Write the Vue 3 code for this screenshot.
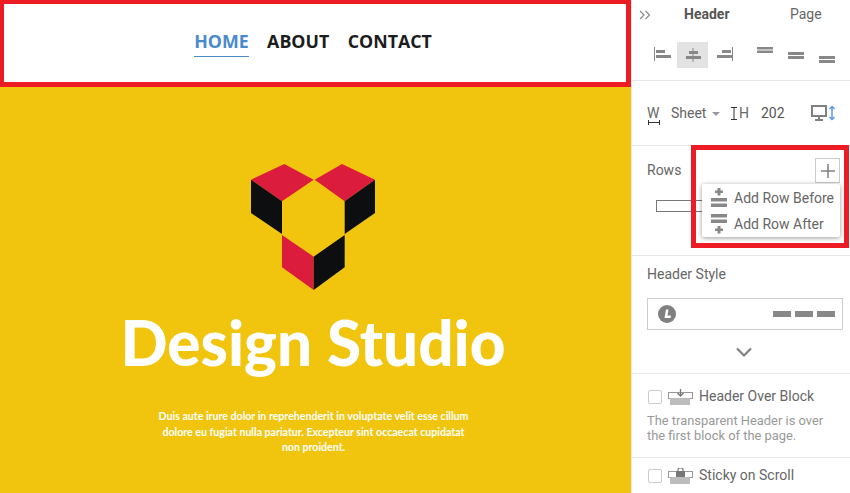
<template>
  <div class="page">
    <main class="canvas">
      <header class="site-header">
        <nav class="site-nav">
          <a class="active">HOME</a>
          <a>ABOUT</a>
          <a>CONTACT</a>
        </nav>
      </header>
      <section class="hero">
        <svg class="logo" width="124" height="127" viewBox="0 0 372 381">
          <polygon fill="#dc1c3c" points="0,47 100,0 188,47 93,112" />
          <polygon fill="#dc1c3c" points="191,47 273,0 372,47 281,112" />
          <polygon fill="#0c0e10" points="0,47 93,112 93,210 0,147" />
          <polygon fill="#0c0e10" points="372,47 281,112 281,210 372,147" />
          <polygon fill="#dc1c3c" points="93,213 188,278 188,378 93,310" />
          <polygon fill="#0c0e10" points="281,213 188,278 188,378 281,310" />
        </svg>
        <h1>Design Studio</h1>
        <p>Duis aute irure dolor in reprehenderit in voluptate velit esse cillum dolore eu fugiat nulla pariatur. Excepteur sint occaecat cupidatat non proident.</p>
      </section>
    </main>

    <aside class="panel">
      <div class="tabs">
        <svg class="collapse" width="12" height="10" viewBox="0 0 12 10" fill="none" stroke="#8a8a8a" stroke-width="1.2">
          <path d="M1 1l4 4-4 4M6.500 1l4 4-4 4" />
        </svg>
        <span class="tab current">Header</span>
        <span class="tab">Page</span>
      </div>

      <div class="aligns">
        <span v-for="a in aligns" :key="a.id" class="align" :class="[a.id, { on: a.on }]">
          <svg width="18" height="18" viewBox="0 0 18 18" fill="#888">
            <rect v-for="(r, i) in a.rects" :key="i" :x="r[0]" :y="r[1]" :width="r[2]" :height="r[3]" />
          </svg>
        </span>
      </div>

      <div class="size-row">
        <span class="w-label">W</span>
        <svg class="w-bar" width="12" height="5" viewBox="0 0 12 5" fill="none" stroke="#333" stroke-width="1">
          <path d="M.5 0v5M11.500 0v5M0 2.500h12" />
        </svg>
        <span class="sheet">Sheet</span>
        <span class="caret"></span>
        <svg class="h-cursor" width="6" height="13" viewBox="0 0 6 13" fill="none" stroke="#333" stroke-width="1">
          <path d="M0 .5h6M0 12.500h6M3 0v13" />
        </svg>
        <span class="h-label">H</span>
        <span class="h-value">202</span>
        <svg class="monitor" width="26" height="16" viewBox="0 0 26 16" fill="none">
          <rect x="1" y="1" width="14" height="10" stroke="#808080" stroke-width="2" />
          <path d="M8 11v3M4 15h8" stroke="#808080" stroke-width="2" />
          <path d="M21 1.500v13M18.500 4L21 1.500 23.500 4M18.500 12l2.500 2.500 2.500-2.500" stroke="#5a9bf0" stroke-width="1.500" />
        </svg>
      </div>

      <div class="rows">
        <span class="label">Rows</span>
        <span class="add-btn">
          <svg width="14" height="14" viewBox="0 0 14 14" stroke="#808080" stroke-width="1.500"><path d="M7 0v14M0 7h14" /></svg>
        </span>
        <div class="row-preview"></div>
        <div class="row-menu">
          <div class="menu-item">
            <svg width="16" height="20" viewBox="0 0 16 20" fill="#888">
              <path d="M6.500 0h3v2.500H12v2.500H9.500v2.500h-3V5H4V2.500h2.500z" />
              <rect y="10" width="16" height="3.500" /><rect y="15.500" width="16" height="3.500" />
            </svg>
            <span>Add Row Before</span>
          </div>
          <div class="menu-item">
            <svg width="16" height="20" viewBox="0 0 16 20" fill="#888">
              <rect y="0" width="16" height="3.500" /><rect y="5.500" width="16" height="3.500" />
              <path d="M6.500 12h3v2.500H12V17H9.500v2.500h-3V17H4v-2.500h2.500z" />
            </svg>
            <span>Add Row After</span>
          </div>
        </div>
        <div class="mark"></div>
      </div>

      <div class="style-block">
        <span class="label">Header Style</span>
        <div class="style-box">
          <span class="style-logo">
            <svg width="18" height="18" viewBox="0 0 18 18">
              <circle cx="9" cy="9" r="9" fill="#808080" />
              <path d="M8 4.500h2.500L9.500 10.500h3.500l-.4 2.500H6.500z" fill="#fff" />
            </svg>
          </span>
          <span class="dashes"><i></i><i></i><i></i></span>
        </div>
        <svg class="chevron" width="18" height="11" viewBox="0 0 18 11" fill="none" stroke="#808080" stroke-width="2.200">
          <path d="M2 1.500l7 7 7-7" />
        </svg>
      </div>

      <div class="option over">
        <div class="option-row">
          <span class="check"></span>
          <svg width="25" height="16" viewBox="0 0 25 16">
            <rect x="0.500" y="3.500" width="24" height="6" fill="#fff" stroke="#999" />
            <rect x="2" y="9" width="20" height="7" fill="#bdbdbd" />
            <path d="M12.500 0v6M9.500 4l3 3 3-3" fill="none" stroke="#777" stroke-width="1.300" />
          </svg>
          <span class="option-name">Header Over Block</span>
        </div>
        <p>The transparent Header is over the first block of the page.</p>
      </div>

      <div class="option sticky">
        <div class="option-row">
          <span class="check"></span>
          <svg width="25" height="16" viewBox="0 0 25 16">
            <rect x="0.500" y="3.500" width="24" height="6" fill="#fff" stroke="#999" />
            <rect x="2" y="9" width="20" height="7" fill="#bdbdbd" />
            <rect x="8" y="3" width="9" height="6" fill="#777" />
            <path d="M10 3.500V2a2.500 2 0 0 1 5 0v1.500" fill="none" stroke="#777" stroke-width="1.200" />
          </svg>
          <span class="option-name">Sticky on Scroll</span>
        </div>
      </div>
    </aside>
  </div>
</template>

<script setup>
const aligns = [
  { id: 'left', rects: [[1, 1, 1, 14], [3, 4, 9, 3], [3, 9, 15, 3]] },
  { id: 'center', on: true, rects: [[8.500, 2, 1, 14], [5, 5, 9, 3], [2, 10, 15, 3]] },
  { id: 'right', rects: [[17, 1, 1, 14], [7, 4, 9, 3], [2, 9, 15, 3]] },
  { id: 'top', rects: [[1, 1, 16, 2.500], [1, 4.500, 16, 2.500]] },
  { id: 'middle', rects: [[1, 6, 16, 3], [1, 10, 16, 3]] },
  { id: 'bottom', rects: [[1, 10, 16, 3], [1, 14, 16, 3]] }
];
</script>

<style>
html, body { margin: 0; overflow: hidden; background: #fff; }
</style>

<style scoped>
.page {
  display: flex;
  width: 850px;
  height: 493px;
  overflow: hidden;
  font-family: Roboto, "Liberation Sans", sans-serif;
  color: #666;
}
.canvas {
  width: 631px;
  flex: none;
  display: flex;
  flex-direction: column;
}
.site-header {
  box-sizing: border-box;
  height: 87px;
  border: 4px solid #ed1c24;
  border-bottom-width: 5px;
  border-right-width: 5px;
  background: #fff;
  display: flex;
  justify-content: center;
  padding: 25px 4px 0 0;
}
.site-nav {
  display: flex;
  gap: 18.500px;
  height: 28px;
  font-family: "Open Sans", sans-serif;
  font-weight: 700;
  font-size: 17.800px;
  line-height: 24px;
  color: #1c1c1c;
}
.site-nav a.active {
  color: #4a8acb;
  border-bottom: 1px solid #4a8acb;
}
.hero {
  flex: 1;
  background: #f1c50e;
  display: flex;
  flex-direction: column;
  align-items: center;
  padding-top: 77px;
  color: #fff;
}
.logo { margin-left: -6px; }
h1 {
  margin: 16px 0 0 -5px;
  font-family: Lato, "Open Sans", sans-serif;
  font-weight: 900;
  font-size: 62px;
  line-height: 70px;
}
.hero p {
  margin: 32px 0 0 -4px;
  width: 320px;
  text-align: center;
  font-family: Lato, "Open Sans", sans-serif;
  font-weight: 700;
  font-size: 10.600px;
  line-height: 15.500px;
}
.panel {
  flex: 1;
  border-left: 1px solid #e8e8e8;
  position: relative;
  font-size: 14px;
}
.tabs {
  height: 29px;
  display: flex;
  align-items: center;
  position: relative;
}
.collapse { position: absolute; left: 7px; top: 10px; }
.tab { position: absolute; top: 6px; line-height: 17px; }
.tab.current { left: 52px; font-weight: 700; color: #555; }
.tab:not(.current) { left: 158px; color: #666; }
.aligns {
  display: flex;
  height: 52px;
  box-sizing: border-box;
  padding: 13px 0 0 14px;
  border-bottom: 1px solid #e8e8e8;
}
.align {
  width: 31px;
  height: 26px;
  display: flex;
  align-items: center;
  justify-content: center;
}
.align.on { background: #e3e3e3; }
.align.top { margin-left: 10px; }
.size-row {
  height: 65px;
  box-sizing: border-box;
  border-bottom: 1px solid #e8e8e8;
  position: relative;
  line-height: 17px;
}
.size-row > * { position: absolute; top: 24px; }
.w-label { left: 15px; }
.size-row .w-bar { left: 16px; top: 39px; }
.sheet { left: 39px; }
.size-row .caret {
  left: 80px;
  top: 31px;
  border: 4px solid transparent;
  border-top-color: #999;
}
.size-row .h-cursor { left: 99px; top: 26px; }
.h-label { left: 107px; }
.h-value { left: 129px; color: #555; }
.size-row .monitor { left: 179px; top: 24px; }
.rows {
  height: 110px;
  box-sizing: border-box;
  border-bottom: 1px solid #e8e8e8;
  position: relative;
}
.label { position: absolute; left: 15px; top: 16px; line-height: 17px; }
.add-btn {
  position: absolute;
  left: 183px;
  top: 12px;
  width: 25px;
  height: 25px;
  box-sizing: border-box;
  border: 1px solid #ccc;
  display: flex;
  align-items: center;
  justify-content: center;
}
.row-preview {
  position: absolute;
  left: 24px;
  top: 54px;
  width: 60px;
  height: 12px;
  box-sizing: border-box;
  border: 1px solid #777;
}
.row-menu {
  position: absolute;
  left: 70px;
  top: 38px;
  width: 138px;
  height: 53px;
  padding-top: 1px;
  box-sizing: border-box;
  background: #fff;
  border-radius: 2px;
  box-shadow: 0 1px 5px rgba(0, 0, 0, 0.4);
  z-index: 2;
}
.menu-item {
  height: 26px;
  display: flex;
  align-items: center;
  gap: 7px;
  padding-left: 9px;
  white-space: nowrap;
}
.mark {
  position: absolute;
  left: 59px;
  top: -1px;
  width: 158px;
  height: 103px;
  box-sizing: border-box;
  border: 5px solid #ed1c24;
  z-index: 3;
}
.style-block {
  height: 118px;
  box-sizing: border-box;
  border-bottom: 1px solid #e8e8e8;
  position: relative;
}
.style-block .label { top: 10px; }
.style-box {
  position: absolute;
  left: 15px;
  top: 42px;
  width: 196px;
  height: 32px;
  box-sizing: border-box;
  border: 1px solid #ccc;
  display: flex;
  align-items: center;
  justify-content: space-between;
  padding: 0 7px 0 10px;
}
.style-logo { display: flex; }
.dashes { display: flex; gap: 4px; }
.dashes i { width: 18px; height: 6px; background: #888; }
.chevron { position: absolute; left: 103px; top: 91px; }
.option { padding: 0 15px; }
.over {
  height: 84px;
  box-sizing: border-box;
  border-bottom: 1px solid #e8e8e8;
  padding-top: 14px;
}
.sticky { padding-top: 9px; }
.option-row {
  display: flex;
  align-items: center;
  gap: 6px;
  line-height: 17px;
}
.check {
  width: 14px;
  height: 14px;
  box-sizing: border-box;
  margin-left: 1px;
  border: 1px solid #ccc;
  border-radius: 2px;
}
.option-name { white-space: nowrap; }
.option p {
  margin: 8px 0 0;
  font-size: 12.900px;
  line-height: 15px;
  color: #999;
}
</style>
